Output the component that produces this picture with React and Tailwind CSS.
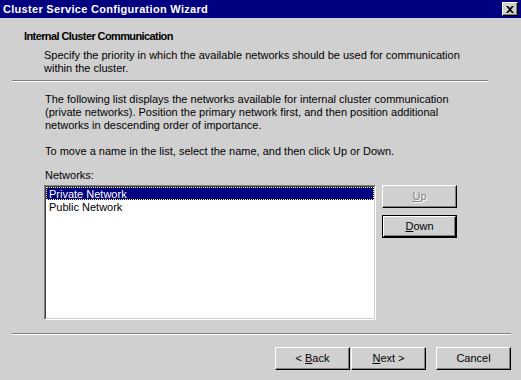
import React from "react";

const font = "font-['Liberation_Sans',Arial,sans-serif]";

const Btn = ({ children, def, disabled, className = "" }) => (
  <div className={`h-[23px] w-[75px] ${def ? "border border-black" : ""} ${className}`}>
    <div className="h-full w-full border border-t-white border-l-white border-b-black border-r-black shadow-[inset_-1px_-1px_#808080] flex items-center justify-center text-[11px]">
      <span className={disabled ? "text-[#808080] [text-shadow:1px_1px_#fff]" : "text-black"}>{children}</span>
    </div>
  </div>
);

export default function App() {
  return (
    <div className={`w-[521px] h-[380px] bg-[#d0d0d0] ${font} text-[11px] leading-[13px] text-black flex flex-col overflow-hidden`}>
      <div className="h-[18px] bg-[#000080] flex items-center justify-between pl-[3px] pr-[3px]">
        <span className="text-white font-bold text-[11px] tracking-[0.3px]">Cluster Service Configuration Wizard</span>
        <div className="w-[16px] h-[14px] bg-[#d0d0d0] border border-t-white border-l-white border-b-black border-r-black shadow-[inset_-1px_-1px_#808080] flex items-center justify-center">
          <svg width="8" height="7" viewBox="0 0 8 7">
            <path d="M0 0h2l2 2 2-2h2L5 3.5 8 7H6L4 5 2 7H0l3-3.5z" fill="#000" />
          </svg>
        </div>
      </div>

      <div className="pt-[12px] pl-[24px]">
        <div className="font-bold tracking-[-0.6px]">Internal Cluster Communication</div>
        <div className="pl-[20px] pt-[6px] whitespace-nowrap">
          Specify the priority in which the available networks should be used for communication
          <br />
          within the cluster.
        </div>
      </div>
      <div className="mt-[5px] ml-[12px] w-[476px] border-t border-t-[#808080] border-b border-b-white" />

      <div className="pl-[45px] pt-[11px] whitespace-nowrap">
        <div>
          The following list displays the networks available for internal cluster communication
          <br />
          (private networks). Position the primary network first, and then position additional
          <br />
          networks in descending order of importance.
        </div>
        <div className="mt-[13px]">To move a name in the list, select the name, and then click Up or Down.</div>
        <div className="mt-[11px]">Networks:</div>
      </div>

      <div className="flex pl-[44px] pt-[3px] gap-[6px]">
        <div className="w-[332px] h-[135px] border border-t-[#808080] border-l-[#808080] border-b-white border-r-white">
          <div className="h-full w-full bg-white border border-t-[#404040] border-l-[#404040] border-b-[#d0d0d0] border-r-[#d0d0d0]">
            <div className="h-[13px] bg-[#000080] text-white border border-dotted border-[#ffff80] pl-[2px] leading-[12px]">Private Network</div>
            <div className="h-[13px] pl-[3px] leading-[14px]">Public Network</div>
          </div>
        </div>
        <div className="flex flex-col gap-[7px]">
          <Btn disabled><u>U</u>p</Btn>
          <Btn def><u>D</u>own</Btn>
        </div>
      </div>

      <div className="mt-[13px] ml-[12px] w-[499px] border-t border-t-[#808080] border-b border-b-white" />

      <div className="flex justify-end pr-[10px] pt-[12px]">
        <Btn>&lt; <u>B</u>ack</Btn>
        <Btn className="ml-px"><u>N</u>ext &gt;</Btn>
        <Btn className="ml-[10px]">Cancel</Btn>
      </div>
    </div>
  );
}
